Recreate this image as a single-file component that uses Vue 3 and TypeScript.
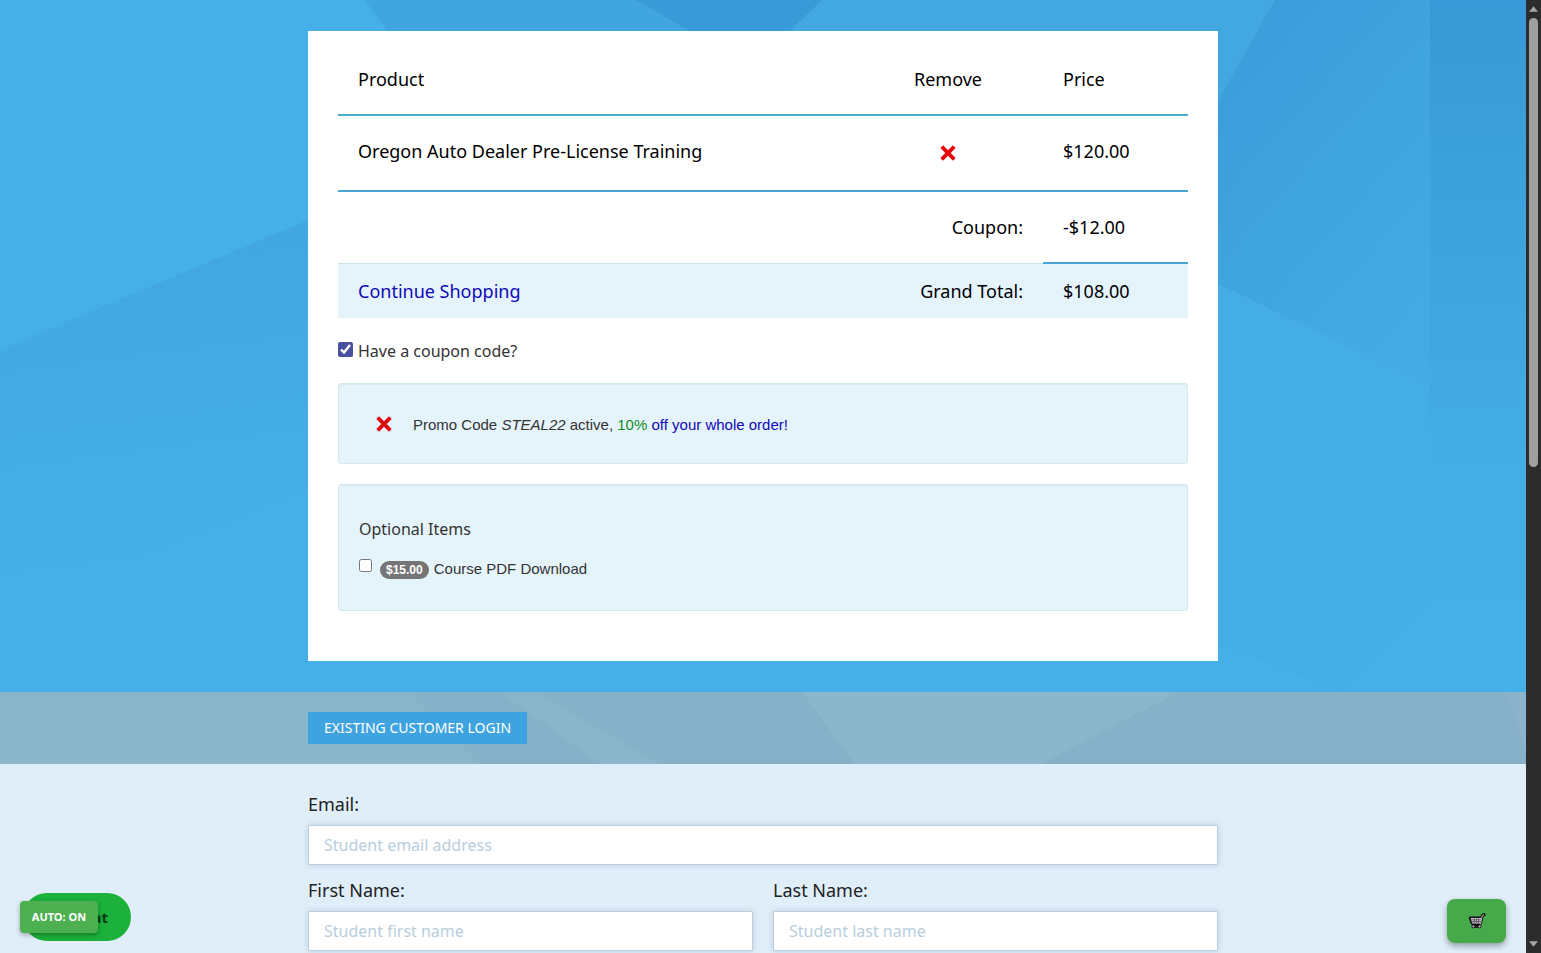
<script setup lang="ts">
import { ref } from 'vue'

const hasCoupon = ref(true)
const wantsPdf = ref(false)
const email = ref('')
const firstName = ref('')
const lastName = ref('')
</script>

<template>
  <div class="window">
    <div class="page">
      <section class="hero">
        <svg class="facets" viewBox="0 0 1526 692" preserveAspectRatio="none" aria-hidden="true">
          <defs>
            <linearGradient id="fadeLeft" x1="0.5" y1="0" x2="0.6" y2="1">
              <stop offset="0" stop-color="#42a6e1" />
              <stop offset="0.6" stop-color="#44ade6" />
              <stop offset="1" stop-color="#45b0e8" />
            </linearGradient>
            <linearGradient id="fadeRight" x1="0" y1="0" x2="0.35" y2="1">
              <stop offset="0" stop-color="#3a9bd9" />
              <stop offset="0.6" stop-color="#43a9e2" />
              <stop offset="1" stop-color="#44ade6" />
            </linearGradient>
            <linearGradient id="fadeEdge" x1="0" y1="0" x2="0" y2="1">
              <stop offset="0" stop-color="#3799d5" />
              <stop offset="1" stop-color="#44ade6" />
            </linearGradient>
          </defs>
          <polygon points="0,350 308,220 308,490 0,625" fill="url(#fadeLeft)" />
          <polygon points="365,0 1275,0 1230,88 1150,120 450,120" fill="#41a5df" />
          <polygon points="636,0 822,0 760,60 740,60" fill="#389ad6" />
          <polygon points="822,0 1275,0 1200,140 760,60" fill="#43a8e1" />
          <polygon points="1275,0 1430,0 1430,692 1340,692 1210,600 1210,115" fill="url(#fadeRight)" />
          <polygon points="1210,280 1430,385 1430,600 1340,692 1210,640" fill="#44ade6" />
          <polygon points="1430,0 1526,0 1526,470 1430,470" fill="url(#fadeEdge)" />
          <polygon points="1430,470 1526,470 1526,600 1430,600" fill="#44ade6" />
          <polygon points="1430,600 1430,692 1340,692" fill="#45b0e8" />
        </svg>

        <main class="card">
          <table class="cart">
            <thead>
              <tr>
                <th scope="col">Product</th>
                <th scope="col" class="col-remove">Remove</th>
                <th scope="col" class="col-price">Price</th>
              </tr>
            </thead>
            <tbody>
              <tr class="item">
                <td>Oregon Auto Dealer Pre-License Training</td>
                <td class="col-remove">
                  <button type="button" class="remove" aria-label="Remove course">
                    <svg viewBox="0 0 16 16"><path d="M2.4 2.4 13.6 13.6M13.6 2.4 2.4 13.6" /></svg>
                  </button>
                </td>
                <td>$120.00</td>
              </tr>
              <tr class="discount">
                <td colspan="2" class="right">Coupon:</td>
                <td class="ruled">-$12.00</td>
              </tr>
              <tr class="total">
                <td><a href="#shop">Continue Shopping</a></td>
                <td class="right">Grand Total:</td>
                <td>$108.00</td>
              </tr>
            </tbody>
          </table>

          <label class="coupon-toggle">
            <input v-model="hasCoupon" type="checkbox" />
            <span>Have a coupon code?</span>
          </label>

          <div v-if="hasCoupon" class="well promo">
            <button type="button" class="remove" aria-label="Remove promo code">
              <svg viewBox="0 0 16 16"><path d="M2.4 2.4 13.6 13.6M13.6 2.4 2.4 13.6" /></svg>
            </button>
            <p>Promo Code <em>STEAL22</em> active, <span class="green">10%</span> <span class="blue">off your whole order!</span></p>
          </div>

          <div class="well options">
            <h2>Optional Items</h2>
            <label class="option">
              <input v-model="wantsPdf" type="checkbox" />
              <span class="badge">$15.00</span>
              <span>Course PDF Download</span>
            </label>
          </div>
        </main>
      </section>

      <section class="login-bar">
        <svg class="facets" viewBox="0 0 1526 72" preserveAspectRatio="none" aria-hidden="true">
          <polygon points="408,0 1526,0 1526,72 480,72" fill="#86b1c9" />
          <polygon points="500,0 535,0 660,72 600,72" fill="#8ab5cb" />
          <polygon points="802,0 1180,0 1040,72 855,72" fill="#8bb6cc" />
          <polygon points="1508,0 1526,0 1526,60" fill="#8cb3cc" />
        </svg>
        <div class="container">
          <button type="button" class="login">EXISTING CUSTOMER LOGIN</button>
        </div>
      </section>

      <form class="details" @submit.prevent>
        <div class="container fields">
          <div class="field wide">
            <label for="email">Email:</label>
            <input id="email" v-model="email" type="email" placeholder="Student email address" />
          </div>
          <div class="field">
            <label for="first">First Name:</label>
            <input id="first" v-model="firstName" type="text" placeholder="Student first name" />
          </div>
          <div class="field">
            <label for="last">Last Name:</label>
            <input id="last" v-model="lastName" type="text" placeholder="Student last name" />
          </div>
        </div>
      </form>

      <button type="button" class="chat">Chat</button>
      <button type="button" class="auto">AUTO: ON</button>
      <button type="button" class="basket" aria-label="Shopping cart">
        <svg viewBox="0 0 18 18">
          <path class="edge" d="M16 2.6 14.2 3.6 12.4 11.4H4.2L2.4 6H13.4M5.2 14.2H11.6" />
          <path class="body" d="M2.6 6H13.4L12.2 11.4H4.4Z" />
          <path class="mesh" d="M3.4 7.8H12.8M4 9.6H12.4M6.2 6.4V11M8.4 6.4V11M10.6 6.4V11" />
          <path class="handle" d="M16 2.6 14.2 3.6 12.4 12.4" />
          <circle cx="5.4" cy="14.4" r="1.5" />
          <circle cx="11.6" cy="14.4" r="1.5" />
        </svg>
      </button>
    </div>

    <div class="scrollbar" aria-hidden="true">
      <svg viewBox="0 0 10 6"><path d="M0 6 5 0 10 6Z" /></svg>
      <div class="track"><div class="thumb"></div></div>
      <svg viewBox="0 0 10 6"><path d="M0 0 5 6 10 0Z" /></svg>
    </div>
  </div>
</template>

<style>
body {
  margin: 0;
}
</style>

<style scoped>
* {
  box-sizing: border-box;
}
.window {
  display: grid;
  grid-template-columns: 1fr 15px;
  height: 100vh;
  overflow: hidden;
  font-family: "Noto Sans", "Open Sans", sans-serif;
  font-size: 18px;
  line-height: 24px;
  color: #000;
}
.page {
  position: relative;
  height: 100vh;
  overflow: hidden;
  background: #e0eef9;
}
button,
input {
  font: inherit;
}
button {
  border: 0;
  padding: 0;
  cursor: pointer;
}
.hero {
  position: relative;
  padding: 31px 20px;
  background: #45b0e8;
}
.facets {
  position: absolute;
  inset: 0;
  width: 100%;
  height: 100%;
}
.card {
  position: relative;
  max-width: 910px;
  margin: 0 auto;
  padding: 13px 30px 50px;
  background: #fff;
}
.cart {
  width: 100%;
  border-collapse: separate;
  border-spacing: 0;
  table-layout: fixed;
}
.cart th,
.cart td {
  padding: 0 20px;
  text-align: left;
  font-weight: 400;
}
.cart th {
  height: 72px;
  border-bottom: 2px solid #4aadcb;
}
.cart .item td {
  height: 76px;
  padding-bottom: 4px;
  border-bottom: 2px solid #4ba6d2;
}
.discount td {
  height: 72px;
  border-bottom: 1px solid #cfe2ea;
}
.cart .discount .right {
  padding-bottom: 2px;
}
.discount .ruled {
  border-bottom: 2px solid #4ba6d2;
}
.total td {
  height: 54px;
  background: #e5f4fb;
}
.cart .col-remove {
  width: 190px;
  text-align: center;
}
.cart .col-price {
  width: 145px;
}
.cart .right {
  text-align: right;
}
.total a {
  color: #1008b8;
  text-decoration: none;
}
.remove {
  display: inline-block;
  width: 18px;
  height: 18px;
  background: none;
  vertical-align: middle;
}
.remove svg {
  display: block;
  width: 18px;
  height: 18px;
}
.remove path {
  fill: none;
  stroke: #e4080c;
  stroke-width: 3.4;
}
.coupon-toggle {
  display: flex;
  align-items: center;
  gap: 5px;
  margin: 20px 0;
  height: 25px;
  padding-bottom: 2px;
  font-size: 16px;
  color: #333;
}
.coupon-toggle input {
  width: 15px;
  height: 15px;
  margin: 0;
  accent-color: #4a4f9f;
}
.coupon-toggle span {
  padding-top: 2px;
}
.well {
  border: 1px solid #d5e6ec;
  border-radius: 3px;
  background: #e5f4fb;
  box-shadow: inset 0 1px 1px rgba(0, 0, 0, 0.05);
  color: #333;
}
.promo {
  display: flex;
  align-items: center;
  gap: 20px;
  height: 81px;
  margin-bottom: 20px;
  padding: 0 36px;
  font: 15px/20px "Liberation Sans", Arial, sans-serif;
}
.promo p {
  margin: 0;
  padding-top: 2px;
}
.green {
  color: #0f8a1f;
}
.blue {
  color: #1008b8;
}
.options {
  height: 127px;
  padding: 32px 20px;
}
.options h2 {
  margin: 0;
  font-size: 16px;
  font-weight: 400;
  line-height: 24px;
}
.option {
  display: flex;
  align-items: center;
  margin-top: 16px;
  height: 24px;
  font: 15px/20px "Liberation Sans", Arial, sans-serif;
}
.option input {
  width: 13px;
  height: 13px;
  margin: 0 8px 8px 0;
}
.badge {
  margin: 2px 5px 0 0;
  padding: 0 6px;
  border-radius: 9px;
  background: #757575;
  color: #fff;
  font-size: 12px;
  font-weight: 700;
  line-height: 18px;
}
.login-bar {
  position: relative;
  padding: 20px;
  background: #8bb6ca;
}
.container {
  position: relative;
  max-width: 910px;
  margin: 0 auto;
}
.login {
  display: block;
  height: 32px;
  padding: 0 16px;
  background: #3ea3df;
  color: #fff;
  font-size: 14px;
}
.details {
  padding: 28px 20px;
}
.fields {
  display: grid;
  grid-template-columns: 1fr 1fr;
  gap: 13px 20px;
}
.wide {
  grid-column: 1 / -1;
}
.field label {
  display: block;
  margin-bottom: 9px;
  color: #222;
}
.field input {
  display: block;
  width: 100%;
  height: 40px;
  padding: 0 15px;
  border: 1px solid #b9cfdd;
  border-radius: 1px;
  background: #fff;
  box-shadow: 0 0 6px rgba(120, 150, 180, 0.35);
  font-size: 16px;
}
.field input::placeholder {
  color: #b8cedd;
  opacity: 1;
}
.chat {
  position: absolute;
  left: 23px;
  bottom: 12px;
  width: 108px;
  height: 48px;
  padding-right: 23px;
  border-radius: 24px;
  background: #1bb13a;
  color: #053b12;
  font-size: 15px;
  font-weight: 700;
  text-align: right;
}
.auto {
  position: absolute;
  left: 20px;
  bottom: 20px;
  width: 78px;
  height: 32px;
  border-radius: 4px;
  background: #4caf50;
  box-shadow: 0 2px 5px rgba(0, 0, 0, 0.3);
  color: #fff;
  font-size: 11px;
  font-weight: 700;
}
.basket {
  position: absolute;
  right: 20px;
  bottom: 10px;
  display: grid;
  place-items: center;
  width: 59px;
  height: 44px;
  border-radius: 8px;
  background: #46aa4b;
  box-shadow: 0 3px 6px rgba(0, 0, 0, 0.35);
}
.basket svg {
  width: 18px;
  height: 18px;
}
.basket .edge {
  fill: none;
  stroke: #111;
  stroke-width: 3;
  stroke-linejoin: round;
  stroke-linecap: round;
}
.basket .body {
  fill: #d8cfdc;
}
.basket .mesh {
  fill: none;
  stroke: #3b333f;
  stroke-width: 0.7;
}
.basket circle {
  fill: #c9bfcd;
  stroke: #111;
  stroke-width: 1;
}
.basket .handle {
  fill: none;
  stroke: #b9b0bd;
  stroke-width: 1;
}
.scrollbar {
  display: flex;
  flex-direction: column;
  align-items: center;
  gap: 6px;
  padding: 6px 0;
  background: #2c2c2c;
}
.scrollbar svg {
  width: 9px;
  height: 6px;
  fill: #a5a5a5;
}
.track {
  flex: 1;
  width: 9px;
}
.thumb {
  height: 49%;
  border-radius: 5px;
  background: #9f9f9f;
}
</style>
